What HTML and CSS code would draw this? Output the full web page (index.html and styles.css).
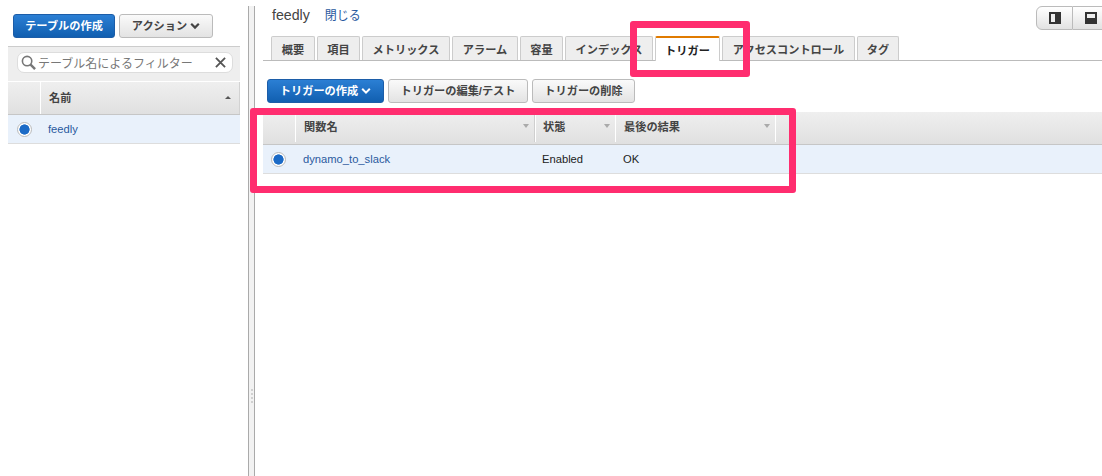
FILE: index.html
```html
<!DOCTYPE html>
<html lang="ja">
<head>
<meta charset="utf-8">
<title>DynamoDB トリガー</title>
<link rel="stylesheet" href="styles.css">
</head>
<body>
<div class="app">
  <aside class="side">
    <div class="side-actions">
      <button class="btn primary side-create">テーブルの作成</button>
      <button class="btn side-action">アクション
        <svg class="chev" viewBox="0 0 10 8"><path d="M1.2 1.8 5 5.6 8.8 1.8" fill="none" stroke="currentColor" stroke-width="2.2"/></svg>
      </button>
    </div>
    <div class="filter">
      <div class="filter-input">
        <svg class="search" viewBox="0 0 16 16"><circle cx="6.5" cy="6.5" r="5" fill="none" stroke="#777" stroke-width="1.7"/><path d="M10 10l5 5" stroke="#777" stroke-width="2.6"/></svg>
        <span class="placeholder">テーブル名によるフィルター</span>
        <svg class="clear" viewBox="0 0 12 12"><path d="M1 1l10 10M11 1 1 11" stroke="#555" stroke-width="2"/></svg>
      </div>
    </div>
    <div class="side-head">
      <div class="side-head-radio"></div>
      <div class="side-head-name"><span>名前</span><i class="up"></i></div>
    </div>
    <div class="side-row">
      <div class="radio-cell side-radio"><span class="radio"></span></div>
      <a class="link">feedly</a>
    </div>
  </aside>

  <div class="splitter"><span class="grip"></span><span class="grip"></span><span class="grip"></span><span class="grip"></span></div>

  <main class="main">
    <div class="title-row">
      <div class="title"><span class="name">feedly</span><a class="close">閉じる</a></div>
      <div class="toggle">
        <span class="toggle-btn">
          <svg viewBox="0 0 12 12"><rect width="12" height="12" fill="#333"/><rect x="2" y="2" width="4" height="8" fill="#eee"/></svg>
        </span>
        <span class="toggle-btn">
          <svg viewBox="0 0 12 12"><rect width="12" height="12" fill="#333"/><rect x="2" y="2" width="8" height="4" fill="#eee"/></svg>
        </span>
      </div>
    </div>

    <nav class="tabs">
      <span class="tab w44">概要</span>
      <span class="tab w43">項目</span>
      <span class="tab w88">メトリックス</span>
      <span class="tab w66">アラーム</span>
      <span class="tab w43">容量</span>
      <span class="tab w88">インデックス</span>
      <span class="tab active w65">トリガー</span>
      <span class="tab w133">アクセスコントロール</span>
      <span class="tab w42">タグ</span>
    </nav>

    <div class="toolbar">
      <button class="btn primary create">トリガーの作成
        <svg class="chev" viewBox="0 0 10 8"><path d="M1.2 1.8 5 5.6 8.8 1.8" fill="none" stroke="currentColor" stroke-width="2"/></svg>
      </button>
      <button class="btn edit">トリガーの編集/テスト</button>
      <button class="btn del">トリガーの削除</button>
    </div>

    <div class="thead">
      <div class="th c-radio"></div>
      <div class="th c-name sep"><span>関数名</span><i class="down"></i></div>
      <div class="th c-state"><span>状態</span><i class="down"></i></div>
      <div class="th c-last"><span>最後の結果</span><i class="down"></i></div>
    </div>
    <div class="trow">
      <div class="radio-cell c-radio"><span class="radio"></span></div>
      <div class="td c-name"><a class="link">dynamo_to_slack</a></div>
      <div class="td c-state">Enabled</div>
      <div class="td c-last">OK</div>
    </div>
  </main>
</div>
<div class="mark mark-tab"></div>
<div class="mark mark-table"></div>
</body>
</html>
```
FILE: styles.css
```css
* { box-sizing: border-box; }
html, body { margin: 0; height: 100%; }
body {
  background: #fff;
  color: #444;
  font-family: "Liberation Sans", "Noto Sans CJK JP", sans-serif;
  font-size: 11.2px;
  overflow: hidden;
}
.app { display: flex; width: 1102px; height: 476px; padding-top: 6px; }

.btn {
  display: inline-flex;
  align-items: center;
  justify-content: center;
  height: 24px;
  padding: 0 0 2px;
  border: 1px solid #bbb;
  border-radius: 3px;
  background: linear-gradient(#fafafa, #e3e3e3);
  color: #444;
  font: 700 11.2px "Liberation Sans", "Noto Sans CJK JP", sans-serif;
}
.btn.primary {
  border-color: #1c5da8;
  background: linear-gradient(#2b7fd4, #115fb0);
  color: #fff;
}
.chev { width: 10px; height: 8px; margin: 2px 0 0 3px; }

.side { width: 232px; margin-left: 8px; flex: none; }
.side-actions { display: flex; gap: 4px; padding: 8px 0 8px 5px; }
.side-create { width: 102px; }
.side-action { width: 94px; }
.filter {
  height: 35px;
  padding: 5px 7px 0 9px;
  background: #eee;
  border-top: 1px solid #ccc;
}
.filter-input {
  display: flex;
  align-items: center;
  height: 21px;
  padding: 0 6px 0 3px;
  background: #fff;
  border: 1px solid #ddd;
  border-radius: 7px;
  color: #777;
  font-size: 12px;
}
.search { width: 15px; height: 15px; flex: none; margin-right: 2px; }
.placeholder { flex: 1; white-space: nowrap; overflow: hidden; }
.clear { width: 11px; height: 11px; flex: none; }
.side-head {
  display: flex;
  height: 34px;
  background: linear-gradient(#efefef, #e0e0e0);
  border-top: 1px solid #fff;
  border-bottom: 1px solid #c6c6c6;
}
.side-head-radio { width: 33px; border-right: 1px solid #fff; }
.side-head-name {
  flex: 1;
  display: flex;
  align-items: center;
  justify-content: space-between;
  padding: 0 8px 2px 8px;
  font-weight: 700;
  border-right: 1px solid #d2d2d2;
}
.up { border: 3px solid transparent; border-top: 0; border-bottom: 3px solid #555; }
.down { border: 3.5px solid transparent; border-bottom: 0; border-top: 4px solid #aaa; }
.side-row {
  display: flex;
  align-items: center;
  height: 29px;
  background: #e9f1fb;
  border-bottom: 1px solid #ddd;
}
.radio-cell { display: flex; align-items: center; justify-content: center; flex: none; }
.side-radio { width: 32px; }
.side-row .link { margin-left: 8px; }
.radio {
  display: block;
  width: 15px;
  height: 15px;
  border-radius: 50%;
  background: radial-gradient(circle, #1b6ac6 0 4.8px, #fff 5.4px);
  border: 1px solid #bbb;
}
.link { color: #2a5a9e; }

.splitter {
  flex: none;
  display: flex;
  flex-direction: column;
  align-items: center;
  justify-content: center;
  gap: 2px;
  width: 7px;
  margin-left: 8px;
  background: #f2f2f2;
  border-left: 1px solid #aaa;
  border-right: 1px solid #aaa;
  padding-top: 310px;
}
.grip { width: 2px; height: 2px; border-radius: 50%; background: #c4c4c4; }

.main { flex: 1; min-width: 0; padding-left: 8px; }
.title-row { display: flex; justify-content: space-between; height: 30px; }
.title { padding: 0 0 0 9px; line-height: 18px; }
.name { font-size: 14.2px; color: #444; }
.close { margin-left: 15px; font-size: 12px; color: #2a5a9e; }
.toggle { display: flex; width: 66px; height: 24px; flex: none; }
.toggle-btn {
  display: flex;
  align-items: center;
  justify-content: center;
  width: 37px;
  flex: none;
  background: linear-gradient(#fff, #e2e2e2);
  border: 1px solid #bbb;
  border-radius: 6px 0 0 6px;
}
.toggle-btn + .toggle-btn { border-left: 0; border-radius: 0; }
.toggle-btn svg { width: 12px; height: 12px; }

.tabs {
  display: flex;
  gap: 2px;
  height: 25px;
  padding-left: 8px;
  border-bottom: 1px solid #bbb;
}
.tab {
  display: flex;
  align-items: center;
  justify-content: center;
  height: 24px;
  background: #eee;
  border: 1px solid #ccc;
  border-bottom: 0;
  border-radius: 2px 2px 0 0;
  font-weight: 700;
  white-space: nowrap;
}
.tab.active {
  height: 25px;
  background: #fff;
  border-top: 2px solid #e07b00;
  color: #222;
}
.w42 { width: 42px; } .w43 { width: 43px; } .w44 { width: 44px; } .w65 { width: 65px; }
.w66 { width: 66px; } .w88 { width: 88px; } .w133 { width: 133px; }

.toolbar { display: flex; gap: 4px; padding: 18px 0 9px 4px; }
.create { width: 117px; }
.edit { width: 140px; }
.del { width: 103px; }

.thead {
  display: flex;
  height: 33px;
  background: linear-gradient(#efefef, #e0e0e0);
  border-bottom: 1px solid #c6c6c6;
}
.th {
  display: flex;
  align-items: center;
  justify-content: space-between;
  height: 28px;
  margin-top: 2px;
  padding: 0 5px 4px 8px;
  font-weight: 700;
  border-right: 1px solid #fff;
}
.th.sep { border-right-color: #cfcfcf; box-shadow: 1px 0 0 #fff; }
.c-radio { width: 33px; flex: none; }
.c-name { width: 239px; flex: none; }
.c-state { width: 81px; flex: none; }
.c-last { width: 160px; flex: none; }
.trow {
  display: flex;
  align-items: center;
  height: 29px;
  background: #e9f1fb;
  border-bottom: 1px solid #ddd;
  color: #222;
}
.td { padding-left: 7px; }
.trow .radio-cell { width: 30px; margin-right: 3px; }

.mark {
  position: absolute;
  border: 7px solid #ff2d6f;
  border-radius: 3px;
}
.mark-tab { left: 630px; top: 21px; width: 120px; height: 56px; }
.mark-table { left: 250px; top: 108px; width: 546px; height: 85px; }
```
